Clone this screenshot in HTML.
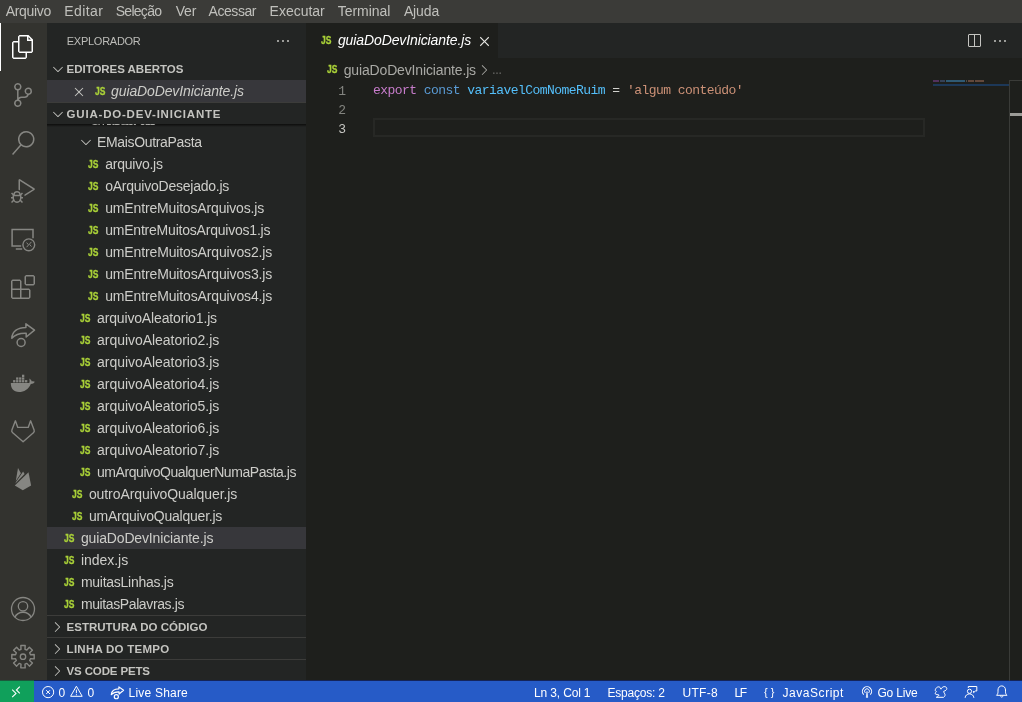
<!DOCTYPE html>
<html lang="pt-BR">
<head>
<meta charset="utf-8">
<title>guiaDoDevIniciante.js</title>
<style>
html,body{margin:0;padding:0;}
body{width:1022px;height:702px;overflow:hidden;background:#1e1f1c;font-family:"Liberation Sans",sans-serif;}
#app{position:relative;width:1022px;height:702px;overflow:hidden;background:#1e1f1c;}
.abs{position:absolute;}
.t{position:absolute;white-space:pre;display:block;}
.js{position:absolute;display:block;width:14px;height:22px;font:bold 10px "Liberation Sans",sans-serif;line-height:22px;color:#a9d038;letter-spacing:0;-webkit-text-stroke:0.3px #a9d038;transform-origin:0 50%;transform:scaleX(0.85);}
#title{left:0;top:0;width:1022px;height:23px;background:#3b3b38;}
#act{left:0;top:23px;width:47px;height:658px;background:#33332f;}
#side{left:47px;top:23px;width:259px;height:658px;background:#232524;}
#tabs{left:306px;top:23px;width:716px;height:35px;background:#232524;}
#tab{left:306px;top:23px;width:192px;height:35px;background:#1e1f1c;}
#status{left:0;top:681px;width:1022px;height:21px;background:#265bc7;}
#remote{left:0;top:681px;width:34px;height:21px;background:#10a05b;}
.sel{background:#37373b;}
.hl{background:#2b2c2e;}
.bd{background:#3c3c3a;height:1px;}
.code{will-change:transform;position:absolute;white-space:pre;font:13px "Liberation Mono",monospace;letter-spacing:-0.55px;line-height:19px;height:19px;}
.ln{will-change:transform;position:absolute;white-space:pre;font:13px "Liberation Mono",monospace;line-height:19px;height:19px;width:30px;text-align:right;color:#83847f;}
svg{position:absolute;overflow:visible;}
</style>
</head>
<body>
<div id="app">
  <!-- backgrounds -->
  <div id="title" class="abs"></div>
  <div id="act" class="abs"></div>
  <div id="side" class="abs"></div>
  <div id="tabs" class="abs"></div>
  <div id="tab" class="abs"></div>
  <div id="status" class="abs"></div>
  <div id="remote" class="abs"></div>

  <div id="sline" class="abs" style="left:34px;top:680px;width:988px;height:1px;background:#14245a;"></div>
  <div class="abs" style="left:0;top:680px;width:34px;height:1px;background:#1b5a3c;"></div>
  <!-- activity bar active indicator -->
  <div class="abs" style="left:0;top:23px;width:1px;height:48px;background:#ffffff;"></div>

  <!-- sidebar rows / borders -->
  <div class="abs sel" style="left:47px;top:80px;width:259px;height:22px;"></div>
  <div class="abs bd" style="left:47px;top:102px;width:259px;"></div>
  <div class="abs sel" style="left:47px;top:527px;width:259px;height:22px;"></div>
  <div class="abs bd" style="left:47px;top:615px;width:259px;"></div>
  <div class="abs bd" style="left:47px;top:637px;width:259px;"></div>
  <div class="abs bd" style="left:47px;top:659px;width:259px;"></div>
  <!-- scroll shadow under folder header -->
  <div class="abs" style="left:47px;top:124px;width:259px;height:3px;background:linear-gradient(#0d0d0c,rgba(13,13,12,0));"></div>

  <!-- editor -->
  <div class="abs" style="left:373px;top:118px;width:552px;height:19px;box-sizing:border-box;border:2px solid #272825;"></div>
  <span class="ln" style="left:316px;top:82px;">1</span>
  <span class="ln" style="left:316px;top:101px;">2</span>
  <span class="ln" style="left:316px;top:120px;color:#c6c6c2;">3</span>
  <span class="code" style="left:373px;top:81px;"><span style="color:#c77ccb">export</span> <span style="color:#5a9bd5">const</span> <span style="color:#54bffa">variavelComNomeRuim</span> <span style="color:#d2d2ce">=</span> <span style="color:#cc9177">'algum conteúdo'</span></span>

  <!-- minimap -->
  <div class="abs" style="left:933px;top:80px;width:6px;height:2px;background:#52325d;"></div>
  <div class="abs" style="left:940px;top:80px;width:5px;height:2px;background:#354258;"></div>
  <div class="abs" style="left:946px;top:80px;width:19px;height:2px;background:#305a74;"></div>
  <div class="abs" style="left:966px;top:80px;width:1px;height:2px;background:#4c4c49;"></div>
  <div class="abs" style="left:968px;top:80px;width:6px;height:2px;background:#62483c;"></div>
  <div class="abs" style="left:975px;top:80px;width:9px;height:2px;background:#62483c;"></div>
  <div class="abs" style="left:933px;top:84px;width:76px;height:2px;background:#1d3858;"></div>
  <!-- minimap / overview ruler -->
  <div class="abs" style="left:1009px;top:80px;width:1px;height:601px;background:#3a3b38;"></div>
  <div class="abs" style="left:1009px;top:80px;width:13px;height:1px;background:#3a3b38;"></div>
  <div class="abs" style="left:1010px;top:113px;width:12px;height:3px;background:#9c9c98;"></div>

  <!-- ===== activity bar icons ===== -->
  <svg style="left:11px;top:35px" width="24" height="24" viewBox="0 0 24 24" fill="#ffffff"><path d="M17.5 0h-9L7 1.5V6H2.5L1 7.5v15.07L2.5 24h12.07L16 22.57V18h4.7l1.3-1.43V4.5L17.5 0zm0 2.12l2.38 2.38H17.5V2.12zm-3 20.38h-12v-15H7v9.07L8.5 18h6v4.5zm6-6h-12v-15H16V6h4.5v10.5z"/></svg>
  <svg style="left:11px;top:83px" width="24" height="24" viewBox="0 0 24 24" fill="#868682"><path d="M21.007 8.222A3.738 3.738 0 0 0 15.045 5.2a3.737 3.737 0 0 0 1.156 6.583 2.988 2.988 0 0 1-2.668 1.67h-2.99a4.456 4.456 0 0 0-2.989 1.165V7.4a3.737 3.737 0 1 0-1.494 0v9.117a3.776 3.776 0 1 0 1.816.099 2.99 2.99 0 0 1 2.668-1.667h2.99a4.484 4.484 0 0 0 4.223-3.039 3.736 3.736 0 0 0 3.25-3.687zM4.565 3.738a2.242 2.242 0 1 1 4.484 0 2.242 2.242 0 0 1-4.484 0zm4.484 16.441a2.242 2.242 0 1 1-4.484 0 2.242 2.242 0 0 1 4.484 0zm8.221-9.715a2.242 2.242 0 1 1 0-4.485 2.242 2.242 0 0 1 0 4.485z"/></svg>
  <svg style="left:11px;top:131px" width="24" height="24" viewBox="0 0 24 24" fill="#868682"><path d="M15.25 0a8.25 8.25 0 0 0-6.18 13.72L1 22.88l1.12 1 8.05-9.12A8.251 8.251 0 1 0 15.25.01V0zm0 15a6.75 6.75 0 1 1 0-13.5 6.75 6.75 0 0 1 0 13.5z"/></svg>
  <svg style="left:11px;top:179px" width="24" height="24" viewBox="0 0 24 24" fill="#868682"><path d="M10.94 13.5l-1.32 1.32a3.73 3.73 0 0 0-7.24 0L1.06 13.5 0 14.56l1.72 1.72-.22.22V18H0v1.5h1.5v.08c.077.489.214.966.41 1.42L0 22.94 1.06 24l1.65-1.65A4.308 4.308 0 0 0 6 24a4.31 4.31 0 0 0 3.29-1.65L10.94 24 12 22.94 10.09 21c.198-.464.336-.951.41-1.45v-.1H12V18h-1.5v-1.5l-.22-.22L12 14.56l-1.06-1.06zM6 13.5a2.25 2.25 0 0 1 2.25 2.25h-4.5A2.25 2.25 0 0 1 6 13.5zm3 6a3.33 3.33 0 0 1-3 3 3.33 3.33 0 0 1-3-3v-2.25h6v2.25zm14.76-9.9v1.26L13.5 17.37V15.6l8.5-5.37L9 2v9.46a5.07 5.07 0 0 0-1.5-.72V.63L8.64 0l15.12 9.6z"/></svg>
  <svg style="left:11px;top:275px" width="24" height="24" viewBox="0 0 24 24" fill="#868682"><path fill-rule="evenodd" clip-rule="evenodd" d="M13.5 1.5L15 0h7.5L24 1.5V9l-1.5 1.5H15L13.500 9V1.5zm1.500 0V9h7.500V1.5H15zM0 15V6l1.500-1.500H9L10.500 6v7.500H18l1.500 1.500v7.500L18 24H1.500L0 22.500V15zm9-1.500V6H1.500v7.500H9zM9 15H1.500v7.500H9V15zm1.500 7.500H18V15h-7.500v7.500z"/></svg>

  <!-- remote explorer -->
  <svg style="left:0;top:0" width="48" height="702" viewBox="0 0 48 702" fill="none" stroke="#868682" stroke-width="1.5">
    <path d="M33 238.3V229.6H12.1V246.1H21.2"/>
    <path d="M15.8 249H22.2"/>
    <circle cx="28.8" cy="244.8" r="5.9" stroke-width="1.4"/>
    <path d="M26.6 242.6l2 2.3l-2 2.3M31.4 241.9l-2 2.3l2 2.3" stroke-width="1"/>
    <!-- live share -->
    <path d="M25.9 323.8L34.5 330.2L26.2 337V333.2C20 333 15 334.6 11.8 338.3C12.2 331.2 18 327.5 25.9 327.4Z" stroke-linejoin="round"/>
    <circle cx="21.1" cy="342.5" r="4"/>
    <!-- gitlab -->
    <path d="M15.4 420.8L17.8 427.4H28.2L30.6 420.8L34.1 430Q34.7 431.6 33.4 432.7L23.1 441.7L12.7 432.7Q11.3 431.6 11.9 430Z" stroke-width="1.4" stroke-linejoin="round"/>
    <!-- account -->
    <circle cx="23" cy="609" r="11.5" stroke-width="1.3"/>
    <circle cx="23" cy="606.3" r="4.7" stroke-width="1.3"/>
    <path d="M14.800 617.400C16.300 614.200 19.300 612.300 23 612.300C26.700 612.300 29.700 614.200 31.200 617.400" stroke-width="1.4"/>
    <!-- gear -->
    <path d="M24.99 649.26 L25.18 645.51 L20.82 645.51 L21.01 649.26 L19.15 650.03 L16.63 647.25 L13.55 650.33 L16.33 652.85 L15.56 654.71 L11.81 654.52 L11.81 658.88 L15.56 658.69 L16.33 660.55 L13.55 663.07 L16.63 666.15 L19.15 663.37 L21.01 664.14 L20.82 667.89 L25.18 667.89 L24.99 664.14 L26.85 663.37 L29.37 666.15 L32.45 663.07 L29.67 660.55 L30.44 658.69 L34.19 658.88 L34.19 654.52 L30.44 654.71 L29.67 652.85 L32.45 650.33 L29.37 647.25 L26.85 650.03Z" stroke-width="1.4" stroke-linejoin="round"/>
    <circle cx="23" cy="656.7" r="2.7" stroke-width="1.3"/>
  </svg>
  <!-- docker + firebase (filled) -->
  <svg style="left:0;top:0" width="48" height="702" viewBox="0 0 48 702" fill="#868682">
    <path d="M10.8 383H29.3C29.8 381.5 29.6 380 29.3 378.4C30.8 379.300 31.600 380.4 31.8 381.4C32.8 381.1 33.9 381.2 34.8 381.8C34 383.2 32.600 384 30.8 384C28.500 389.500 24 392 19 392C13.500 392 10.8 388.500 10.8 383Z"/>
    <rect x="13.1" y="380.1" width="2.3" height="2.3"/>
    <rect x="16.1" y="380.1" width="2.3" height="2.3"/>
    <rect x="19.1" y="380.1" width="2.3" height="2.3"/>
    <rect x="22.0" y="380.1" width="2.3" height="2.3"/>
    <rect x="25.0" y="380.1" width="2.3" height="2.3"/>
    <rect x="16.1" y="377.4" width="2.3" height="2.3"/>
    <rect x="19.1" y="377.4" width="2.3" height="2.3"/>
    <rect x="22.0" y="377.4" width="2.3" height="2.3"/>
    <rect x="22.0" y="374.7" width="2.3" height="2.3"/>
    <path d="M18 468L20.900 473.300L15.8 481Z"/>
    <path d="M21.600 473.700L23.100 471.400L24.600 474.100L15.300 483.600L16.100 481.800Z"/>
    <path d="M28.500 472.200L31.100 485.400L22.800 490.200L14.800 485.400Z"/>
  </svg>
  <!-- ===== small codicons ===== -->
  <svg style="left:49.5px;top:61px" width="16" height="16" viewBox="0 0 16 16" fill="#c5c5c1"><path d="M7.976 10.072l4.357-4.357.62.618L8.284 11h-.618L3 6.333l.619-.618 4.357 4.357z"/></svg>
  <svg style="left:49.5px;top:106px" width="16" height="16" viewBox="0 0 16 16" fill="#c5c5c1"><path d="M7.976 10.072l4.357-4.357.62.618L8.284 11h-.618L3 6.333l.619-.618 4.357 4.357z"/></svg>
  <svg style="left:70.8px;top:83.5px" width="16" height="16" viewBox="0 0 16 16" fill="#c5c5c1"><path d="M8 8.707l3.646 3.647.708-.707L8.707 8l3.647-3.646-.707-.708L8 7.293 4.354 3.646l-.707.708L7.293 8l-3.646 3.646.707.708L8 8.707z"/></svg>
  <svg style="left:274.7px;top:33px" width="16" height="16" viewBox="0 0 16 16" fill="#c5c5c1"><path d="M4 8a1 1 0 1 1-2 0 1 1 0 0 1 2 0zm5 0a1 1 0 1 1-2 0 1 1 0 0 1 2 0zm5 0a1 1 0 1 1-2 0 1 1 0 0 1 2 0z"/></svg>
  <svg style="left:78.2px;top:134px" width="16" height="16" viewBox="0 0 16 16" fill="#c5c5c1"><path d="M7.976 10.072l4.357-4.357.62.618L8.284 11h-.618L3 6.333l.619-.618 4.357 4.357z"/></svg>
  <svg style="left:48.7px;top:618.5px" width="16" height="16" viewBox="0 0 16 16" fill="#c5c5c1"><path d="M10.072 8.024L5.715 3.667l.618-.62L11 7.716v.618L6.333 13l-.618-.619 4.357-4.357z"/></svg>
  <svg style="left:48.7px;top:640.5px" width="16" height="16" viewBox="0 0 16 16" fill="#c5c5c1"><path d="M10.072 8.024L5.715 3.667l.618-.62L11 7.716v.618L6.333 13l-.618-.619 4.357-4.357z"/></svg>
  <svg style="left:48.7px;top:662.5px" width="16" height="16" viewBox="0 0 16 16" fill="#c5c5c1"><path d="M10.072 8.024L5.715 3.667l.618-.62L11 7.716v.618L6.333 13l-.618-.619 4.357-4.357z"/></svg>
  <svg style="left:475.6px;top:32.7px" width="17" height="17" viewBox="0 0 16 16" fill="#e8e8e4"><path d="M8 8.707l3.646 3.647.708-.707L8.707 8l3.647-3.646-.707-.708L8 7.293 4.354 3.646l-.707.708L7.293 8l-3.646 3.646.707.708L8 8.707z"/></svg>
  <svg style="left:476.2px;top:61.5px" width="16" height="16" viewBox="0 0 16 16" fill="#a9a9a5"><path d="M10.072 8.024L5.715 3.667l.618-.62L11 7.716v.618L6.333 13l-.618-.619 4.357-4.357z"/></svg>
  <svg style="left:966px;top:33.2px" width="16" height="16" viewBox="0 0 16 16" fill="#c5c5c1"><path d="M14 1H3L2 2v11l1 1h11l1-1V2l-1-1zM8 13H3V2h5v11zm6 0H9V2h5v11z"/></svg>
  <svg style="left:991.7px;top:33px" width="16" height="16" viewBox="0 0 16 16" fill="#c5c5c1"><path d="M4 8a1 1 0 1 1-2 0 1 1 0 0 1 2 0zm5 0a1 1 0 1 1-2 0 1 1 0 0 1 2 0zm5 0a1 1 0 1 1-2 0 1 1 0 0 1 2 0z"/></svg>
  <svg style="left:492px;top:67.7px" width="10" height="10" viewBox="0 0 16 16" fill="#a9a9a5"><path d="M4 8a1 1 0 1 1-2 0 1 1 0 0 1 2 0zm5 0a1 1 0 1 1-2 0 1 1 0 0 1 2 0zm5 0a1 1 0 1 1-2 0 1 1 0 0 1 2 0z"/></svg>
  <!-- ===== status bar icons ===== -->
  <svg style="left:0;top:0" width="1022" height="702" viewBox="0 0 1022 702" fill="none" stroke="#ffffff" stroke-width="1.1">
    <path d="M12.200 689.600L16 693.400L12.200 697.200M19.800 686.600L16.400 690L19.800 693.400"/>
    <circle cx="48.1" cy="692.1" r="5.6" stroke-width="1"/>
    <path d="M46.200 690.200l3.800 3.800M50 690.200l-3.800 3.800" stroke-width="1"/>
    <path d="M76.400 686.200L82.200 696.300H70.600Z" stroke-width="1" stroke-linejoin="round"/>
    <path d="M76.400 689.600v3.600M76.400 694.200v1.100" stroke-width="1"/>
    <!-- live share small -->
    <g transform="translate(111.3 694.7) scale(0.54) translate(-11.8 -338.3)" stroke-width="2.2">
      <path d="M25.900 323.800L34.500 330.200L26.200 337V333.200C20 333 15 334.600 11.800 338.300C12.200 331.200 18 327.500 25.900 327.400Z" stroke-linejoin="round"/>
      <circle cx="21.100" cy="342" r="3.800"/>
    </g>
    <!-- braces handled as text -->
    <!-- broadcast -->
    <path d="M863.700 694.600A4.600 4.600 0 1 1 870.300 694.600" />
    <path d="M865.300 692.900A2.400 2.400 0 1 1 868.700 692.900" stroke-width="1"/>
    <path d="M867 691.300L866.300 697.400H867.700Z" fill="#ffffff" stroke-width="0.6" stroke-linejoin="round"/>
    <!-- squirrel -->
    <path d="M936.300 697.300H943.600C945.400 696.200 945.400 694.500 944.400 693.200C943.900 692.400 943.600 691.900 943.700 691.300C945.300 690.800 946.900 690 946.800 688.600C946.700 687.200 945.500 686.500 944.200 686.600C942.800 686.700 941.600 687.800 941 689.200C940.600 688 940 687.200 939.200 686.900C937.900 686.600 936.600 687.300 935.800 688.600C935.300 689.400 935.100 690.200 935.300 690.800C935.600 691.300 936 691.500 936.400 691.600C935.600 692.300 935.100 693 935.200 693.800C936 694.500 937.600 694.800 939 695C938.800 695.900 938 696.600 936.300 697.300Z" stroke-width="1" stroke-linejoin="round"/>
    <!-- feedback -->
    <circle cx="969.5" cy="691.300" r="2.100" stroke-width="1"/>
    <path d="M965.100 697.800C965.400 695.300 967.200 693.900 969.500 693.900C971.800 693.900 973.600 695.300 973.900 697.800" stroke-width="1"/>
    <path d="M968.300 688V686.500H976.800V691H975.300L973.600 692.700V691" stroke-width="1" stroke-linejoin="round"/>
    <!-- bell -->
    <path d="M996.500 695.300H1007C1005.900 694.300 1005.500 693.300 1005.500 691.800V690C1005.500 687.600 1003.900 685.900 1001.750 685.900C999.600 685.900 998 687.600 998 690V691.800C998 693.300 997.600 694.300 996.500 695.300Z" stroke-width="1" stroke-linejoin="round"/>
    <path d="M1000.500 695.600C1000.600 696.600 1001.100 697.100 1001.750 697.100C1002.400 697.100 1002.900 696.600 1003 695.600" stroke-width="1"/>
  </svg>

<div id="txt" style="position:absolute;left:0;top:0;width:1022px;height:702px;will-change:transform;">
<span class="js" style="left:88.0px;top:154px">JS</span>
<span class="js" style="left:88.0px;top:176px">JS</span>
<span class="js" style="left:88.0px;top:198px">JS</span>
<span class="js" style="left:88.0px;top:220px">JS</span>
<span class="js" style="left:88.0px;top:242px">JS</span>
<span class="js" style="left:88.0px;top:264px">JS</span>
<span class="js" style="left:88.0px;top:286px">JS</span>
<span class="js" style="left:79.8px;top:308px">JS</span>
<span class="js" style="left:79.8px;top:330px">JS</span>
<span class="js" style="left:79.8px;top:352px">JS</span>
<span class="js" style="left:79.8px;top:374px">JS</span>
<span class="js" style="left:79.8px;top:396px">JS</span>
<span class="js" style="left:79.8px;top:418px">JS</span>
<span class="js" style="left:79.8px;top:440px">JS</span>
<span class="js" style="left:79.8px;top:462px">JS</span>
<span class="js" style="left:71.7px;top:484px">JS</span>
<span class="js" style="left:71.7px;top:506px">JS</span>
<span class="js" style="left:63.7px;top:528px">JS</span>
<span class="js" style="left:63.7px;top:550px">JS</span>
<span class="js" style="left:63.7px;top:572px">JS</span>
<span class="js" style="left:63.7px;top:594px">JS</span>
<span class="js" style="left:95.0px;top:81px">JS</span>
<span class="js" style="left:320.9px;top:29.5px">JS</span>
<span class="js" style="left:326.9px;top:59px">JS</span>
<span class="t" style="left:5.70px;top:0px;line-height:22px;height:22px;font:14px 'Liberation Sans',sans-serif;line-height:22px;color:#c0c0bc;letter-spacing:-0.311px;">Arquivo</span>
<span class="t" style="left:64.20px;top:0px;line-height:22px;height:22px;font:14px 'Liberation Sans',sans-serif;line-height:22px;color:#c0c0bc;letter-spacing:0.424px;">Editar</span>
<span class="t" style="left:115.70px;top:0px;line-height:22px;height:22px;font:14px 'Liberation Sans',sans-serif;line-height:22px;color:#c0c0bc;letter-spacing:-0.716px;">Seleção</span>
<span class="t" style="left:175.80px;top:0px;line-height:22px;height:22px;font:14px 'Liberation Sans',sans-serif;line-height:22px;color:#c0c0bc;letter-spacing:-0.258px;">Ver</span>
<span class="t" style="left:208.50px;top:0px;line-height:22px;height:22px;font:14px 'Liberation Sans',sans-serif;line-height:22px;color:#c0c0bc;letter-spacing:-0.430px;">Acessar</span>
<span class="t" style="left:269.60px;top:0px;line-height:22px;height:22px;font:14px 'Liberation Sans',sans-serif;line-height:22px;color:#c0c0bc;letter-spacing:-0.021px;">Executar</span>
<span class="t" style="left:337.80px;top:0px;line-height:22px;height:22px;font:14px 'Liberation Sans',sans-serif;line-height:22px;color:#c0c0bc;letter-spacing:-0.058px;">Terminal</span>
<span class="t" style="left:403.90px;top:0px;line-height:22px;height:22px;font:14px 'Liberation Sans',sans-serif;line-height:22px;color:#c0c0bc;letter-spacing:-0.128px;">Ajuda</span>
<span class="t" style="left:66.80px;top:23.5px;line-height:35px;height:35px;font:11px 'Liberation Sans',sans-serif;line-height:35px;color:#bdbdb9;letter-spacing:-0.269px;">EXPLORADOR</span>
<span class="t" style="left:66.60px;top:57.5px;line-height:22px;height:22px;font:bold 11.5px 'Liberation Sans',sans-serif;line-height:22px;color:#c4c4c0;letter-spacing:-0.038px;">EDITORES ABERTOS</span>
<span class="t" style="left:66.60px;top:102.5px;line-height:22px;height:22px;font:bold 11.5px 'Liberation Sans',sans-serif;line-height:22px;color:#c4c4c0;letter-spacing:0.795px;">GUIA-DO-DEV-INICIANTE</span>
<span class="t" style="left:66.60px;top:615.5px;line-height:22px;height:22px;font:bold 11.5px 'Liberation Sans',sans-serif;line-height:22px;color:#c4c4c0;letter-spacing:0.001px;">ESTRUTURA DO CÓDIGO</span>
<span class="t" style="left:66.60px;top:637.5px;line-height:22px;height:22px;font:bold 11.5px 'Liberation Sans',sans-serif;line-height:22px;color:#c4c4c0;letter-spacing:0.258px;">LINHA DO TEMPO</span>
<span class="t" style="left:66.60px;top:659.5px;line-height:22px;height:22px;font:bold 11.5px 'Liberation Sans',sans-serif;line-height:22px;color:#c4c4c0;letter-spacing:-0.145px;">VS CODE PETS</span>
<span class="t" style="left:111.10px;top:80px;line-height:22px;height:22px;font:italic 14px 'Liberation Sans',sans-serif;line-height:22px;color:#cdcdc9;letter-spacing:-0.125px;">guiaDoDevIniciante.js</span>
<span class="t" style="left:97.00px;top:131px;line-height:22px;height:22px;font:14px 'Liberation Sans',sans-serif;line-height:22px;color:#cdcdc9;letter-spacing:-0.337px;">EMaisOutraPasta</span>
<span class="t" style="left:105.20px;top:153px;line-height:22px;height:22px;font:14px 'Liberation Sans',sans-serif;line-height:22px;color:#cdcdc9;letter-spacing:-0.236px;">arquivo.js</span>
<span class="t" style="left:105.20px;top:175px;line-height:22px;height:22px;font:14px 'Liberation Sans',sans-serif;line-height:22px;color:#cdcdc9;letter-spacing:-0.239px;">oArquivoDesejado.js</span>
<span class="t" style="left:105.20px;top:197px;line-height:22px;height:22px;font:14px 'Liberation Sans',sans-serif;line-height:22px;color:#cdcdc9;letter-spacing:-0.153px;">umEntreMuitosArquivos.js</span>
<span class="t" style="left:105.20px;top:219px;line-height:22px;height:22px;font:14px 'Liberation Sans',sans-serif;line-height:22px;color:#cdcdc9;letter-spacing:-0.213px;">umEntreMuitosArquivos1.js</span>
<span class="t" style="left:105.20px;top:241px;line-height:22px;height:22px;font:14px 'Liberation Sans',sans-serif;line-height:22px;color:#cdcdc9;letter-spacing:-0.138px;">umEntreMuitosArquivos2.js</span>
<span class="t" style="left:105.20px;top:263px;line-height:22px;height:22px;font:14px 'Liberation Sans',sans-serif;line-height:22px;color:#cdcdc9;letter-spacing:-0.138px;">umEntreMuitosArquivos3.js</span>
<span class="t" style="left:105.20px;top:285px;line-height:22px;height:22px;font:14px 'Liberation Sans',sans-serif;line-height:22px;color:#cdcdc9;letter-spacing:-0.138px;">umEntreMuitosArquivos4.js</span>
<span class="t" style="left:97.00px;top:307px;line-height:22px;height:22px;font:14px 'Liberation Sans',sans-serif;line-height:22px;color:#cdcdc9;letter-spacing:-0.151px;">arquivoAleatorio1.js</span>
<span class="t" style="left:97.00px;top:329px;line-height:22px;height:22px;font:14px 'Liberation Sans',sans-serif;line-height:22px;color:#cdcdc9;letter-spacing:-0.035px;">arquivoAleatorio2.js</span>
<span class="t" style="left:97.00px;top:351px;line-height:22px;height:22px;font:14px 'Liberation Sans',sans-serif;line-height:22px;color:#cdcdc9;letter-spacing:-0.035px;">arquivoAleatorio3.js</span>
<span class="t" style="left:97.00px;top:373px;line-height:22px;height:22px;font:14px 'Liberation Sans',sans-serif;line-height:22px;color:#cdcdc9;letter-spacing:-0.035px;">arquivoAleatorio4.js</span>
<span class="t" style="left:97.00px;top:395px;line-height:22px;height:22px;font:14px 'Liberation Sans',sans-serif;line-height:22px;color:#cdcdc9;letter-spacing:-0.035px;">arquivoAleatorio5.js</span>
<span class="t" style="left:97.00px;top:417px;line-height:22px;height:22px;font:14px 'Liberation Sans',sans-serif;line-height:22px;color:#cdcdc9;letter-spacing:-0.035px;">arquivoAleatorio6.js</span>
<span class="t" style="left:97.00px;top:439px;line-height:22px;height:22px;font:14px 'Liberation Sans',sans-serif;line-height:22px;color:#cdcdc9;letter-spacing:-0.035px;">arquivoAleatorio7.js</span>
<span class="t" style="left:97.00px;top:461px;line-height:22px;height:22px;font:14px 'Liberation Sans',sans-serif;line-height:22px;color:#cdcdc9;letter-spacing:-0.434px;">umArquivoQualquerNumaPasta.js</span>
<span class="t" style="left:88.90px;top:483px;line-height:22px;height:22px;font:14px 'Liberation Sans',sans-serif;line-height:22px;color:#cdcdc9;letter-spacing:-0.082px;">outroArquivoQualquer.js</span>
<span class="t" style="left:88.90px;top:505px;line-height:22px;height:22px;font:14px 'Liberation Sans',sans-serif;line-height:22px;color:#cdcdc9;letter-spacing:-0.224px;">umArquivoQualquer.js</span>
<span class="t" style="left:80.90px;top:527px;line-height:22px;height:22px;font:14px 'Liberation Sans',sans-serif;line-height:22px;color:#cdcdc9;letter-spacing:-0.145px;">guiaDoDevIniciante.js</span>
<span class="t" style="left:80.90px;top:549px;line-height:22px;height:22px;font:14px 'Liberation Sans',sans-serif;line-height:22px;color:#cdcdc9;letter-spacing:-0.024px;">index.js</span>
<span class="t" style="left:80.90px;top:571px;line-height:22px;height:22px;font:14px 'Liberation Sans',sans-serif;line-height:22px;color:#cdcdc9;letter-spacing:-0.264px;">muitasLinhas.js</span>
<span class="t" style="left:80.90px;top:593px;line-height:22px;height:22px;font:14px 'Liberation Sans',sans-serif;line-height:22px;color:#cdcdc9;letter-spacing:-0.388px;">muitasPalavras.js</span>
<span class="t" style="left:90.10px;top:109px;line-height:22px;height:22px;font:14px 'Liberation Sans',sans-serif;line-height:22px;color:#aaaaa6;letter-spacing:-2.706px;clip-path:inset(15px 0 0 0);">UmaOutraPasta</span>
<span class="t" style="left:337.90px;top:23px;line-height:35px;height:35px;font:italic 14px 'Liberation Sans',sans-serif;line-height:35px;color:#ffffff;letter-spacing:-0.105px;">guiaDoDevIniciante.js</span>
<span class="t" style="left:343.70px;top:59px;line-height:22px;height:22px;font:14px 'Liberation Sans',sans-serif;line-height:22px;color:#a9a9a5;letter-spacing:-0.150px;">guiaDoDevIniciante.js</span>
<span class="t" style="left:58.60px;top:682.5px;line-height:21px;height:21px;font:12px 'Liberation Sans',sans-serif;line-height:21px;color:#ffffff;letter-spacing:0.000px;">0</span>
<span class="t" style="left:87.40px;top:682.5px;line-height:21px;height:21px;font:12px 'Liberation Sans',sans-serif;line-height:21px;color:#ffffff;letter-spacing:0.000px;">0</span>
<span class="t" style="left:128.60px;top:682.5px;line-height:21px;height:21px;font:12px 'Liberation Sans',sans-serif;line-height:21px;color:#ffffff;letter-spacing:0.203px;">Live Share</span>
<span class="t" style="left:534.10px;top:682.5px;line-height:21px;height:21px;font:12px 'Liberation Sans',sans-serif;line-height:21px;color:#ffffff;letter-spacing:-0.165px;">Ln 3, Col 1</span>
<span class="t" style="left:607.40px;top:682.5px;line-height:21px;height:21px;font:12px 'Liberation Sans',sans-serif;line-height:21px;color:#ffffff;letter-spacing:-0.197px;">Espaços: 2</span>
<span class="t" style="left:682.40px;top:682.5px;line-height:21px;height:21px;font:12px 'Liberation Sans',sans-serif;line-height:21px;color:#ffffff;letter-spacing:0.325px;">UTF-8</span>
<span class="t" style="left:734.60px;top:682.5px;line-height:21px;height:21px;font:12px 'Liberation Sans',sans-serif;line-height:21px;color:#ffffff;letter-spacing:-1.416px;">LF</span>
<span class="t" style="left:782.60px;top:682.5px;line-height:21px;height:21px;font:12px 'Liberation Sans',sans-serif;line-height:21px;color:#ffffff;letter-spacing:0.530px;">JavaScript</span>
<span class="t" style="left:877.40px;top:682.5px;line-height:21px;height:21px;font:12px 'Liberation Sans',sans-serif;line-height:21px;color:#ffffff;letter-spacing:-0.177px;">Go Live</span>
<span class="t" style="left:763.90px;top:682px;line-height:21px;height:21px;font:11px 'Liberation Sans',sans-serif;line-height:21px;color:#ffffff;letter-spacing:3.141px;">{}</span>
</div>
</div>
</body>
</html>
